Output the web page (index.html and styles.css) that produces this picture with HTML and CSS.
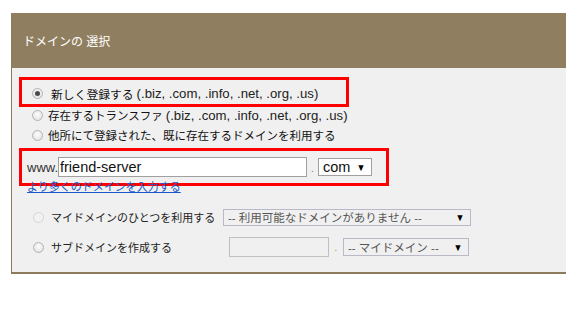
FILE: index.html
```html
<!DOCTYPE html>
<html lang="ja">
<head>
  <meta charset="UTF-8" />
  <title>ドメインの選択</title>
  <link rel="stylesheet" href="styles.css">
</head>
<body>
  <div class="page">
    <div class="header">ドメインの 選択</div>

    <div class="panel">
      <div class="mark mark-new">
        <div class="opt opt-new"><span class="radio on"></span>新しく登録する <span class="lat">(.biz, .com, .info, .net, .org, .us)</span></div>
      </div>
      <div class="opt opt-plain"><span class="radio"></span>存在するトランスファ <span class="lat">(.biz, .com, .info, .net, .org, .us)</span></div>
      <div class="opt opt-plain"><span class="radio"></span>他所にて登録された、既に存在するドメインを利用する</div>

      <div class="mark mark-www">
        <span class="www">www.</span>
        <span class="field field-name">friend-server</span>
        <span class="dot">.</span>
        <span class="select select-tld">com<span class="arrow">▼</span></span>
      </div>
      <a href="#" class="more">より多くのドメインを入力する</a>

      <div class="opt-row row-mine">
        <div class="opt opt-dim"><span class="radio off"></span>マイドメインのひとつを利用する</div>
        <span class="select select-dim select-mine">-- 利用可能なドメインがありません --<span class="arrow">▼</span></span>
      </div>
      <div class="opt-row row-sub">
        <div class="opt opt-dim"><span class="radio"></span>サブドメインを作成する</div>
        <span class="field field-sub"></span>
        <span class="dot dot-sub">.</span>
        <span class="select select-dim select-sub">-- マイドメイン --<span class="arrow">▼</span></span>
      </div>
    </div>
  </div>
</body>
</html>
```

FILE: styles.css
```css
* {
  box-sizing: border-box;
}

body {
  margin: 0;
  padding: 0;
  background: #fff;
  color: #111;
  font-family: "Liberation Sans", "Noto Sans CJK JP", sans-serif;
  font-size: 11.5px;
}

.page {
  padding: 13px 0 0 11px;
}

.header {
  height: 55px;
  background: #8f7f60;
  color: #fff;
  display: flex;
  align-items: center;
  padding-left: 12px;
  font-size: 12px;
}

.panel {
  background: #f0f0f0;
  border-left: 1px solid #8b7b5c;
  border-bottom: 2px solid #8b7b5c;
  padding: 9px 0 15px 7px;
  display: flex;
  flex-direction: column;
}

.mark {
  border: 3px solid #f00;
  display: flex;
  align-items: center;
}

.mark-new {
  width: 330px;
  height: 30px;
  padding: 3px 0 0 10px;
}

.mark-www {
  width: 370px;
  height: 38px;
  margin-top: 3px;
  padding-left: 5px;
}

.opt {
  display: flex;
  align-items: center;
  height: 20px;
  white-space: nowrap;
}

.opt .lat {
  margin-left: 3px;
  font-size: 13.2px;
  color: #222;
}

.opt-new {
  font-size: 11.8px;
}

.opt-new .radio {
  margin-right: 8px;
}

.opt-plain {
  padding-left: 13px;
}

.opt-plain:nth-of-type(2) {
  margin-top: -2px;
}

.opt-plain .radio {
  margin-right: 5px;
}

.radio {
  width: 11px;
  height: 11px;
  border-radius: 50%;
  border: 1px solid #b4b4b4;
  background: radial-gradient(circle at 50% 40%, #fdfdfd, #dcdcdc);
  display: inline-flex;
  align-items: center;
  justify-content: center;
  flex: none;
}

.radio.on::after {
  content: "";
  width: 5px;
  height: 5px;
  border-radius: 50%;
  background: #4a4a4a;
}

.radio.off {
  border-color: #d4d4d4;
  background: #f2f2f2;
}

.www {
  width: 31px;
  font-size: 13px;
  color: #333;
}

.field {
  background: #fff;
  border: 1px solid #a0a0a0;
  height: 20px;
  display: flex;
  align-items: center;
  padding-left: 1px;
  font-size: 14.5px;
  color: #111;
}

.field-name {
  width: 249px;
}

.dot {
  width: 11px;
  text-align: center;
  color: #777;
  font-size: 10px;
  align-self: flex-end;
  margin-bottom: 9px;
}

.select {
  display: flex;
  align-items: center;
  justify-content: space-between;
  border: 1px solid #a0a0a0;
  background: #fff;
  height: 18px;
  padding: 0 5px 0 4px;
  font-size: 14.5px;
  white-space: nowrap;
}

.select-tld {
  width: 54px;
}

.arrow {
  font-size: 10px;
  transform: scaleX(0.9);
  color: #000;
  margin-left: 6px;
}

.more {
  margin: -6px 0 0 8px;
  line-height: 14px;
  font-size: 11px;
  color: #1a57c9;
  text-decoration: underline;
  align-self: flex-start;
}

.opt-row {
  display: flex;
  align-items: center;
  height: 20px;
}

.row-mine {
  margin-top: 13px;
}

.row-sub {
  margin-top: 10px;
}

.opt-dim {
  width: 204px;
  padding-left: 14px;
  font-size: 11px;
  color: #222;
}

.opt-dim .radio {
  margin-right: 7px;
}

.select-dim {
  background: #f0f0f0;
  border-color: #b9b9c9;
  color: #555;
  font-size: 11.5px;
}

.select-mine {
  width: 248px;
  height: 17px;
}

.field-sub {
  width: 100px;
  margin-left: 6px;
  background: #f0f0f0;
  border-color: #c0c0c0;
}

.dot-sub {
  width: 14px;
  color: #c08020;
  margin-bottom: 4px;
}

.select-sub {
  width: 126px;
}
```
